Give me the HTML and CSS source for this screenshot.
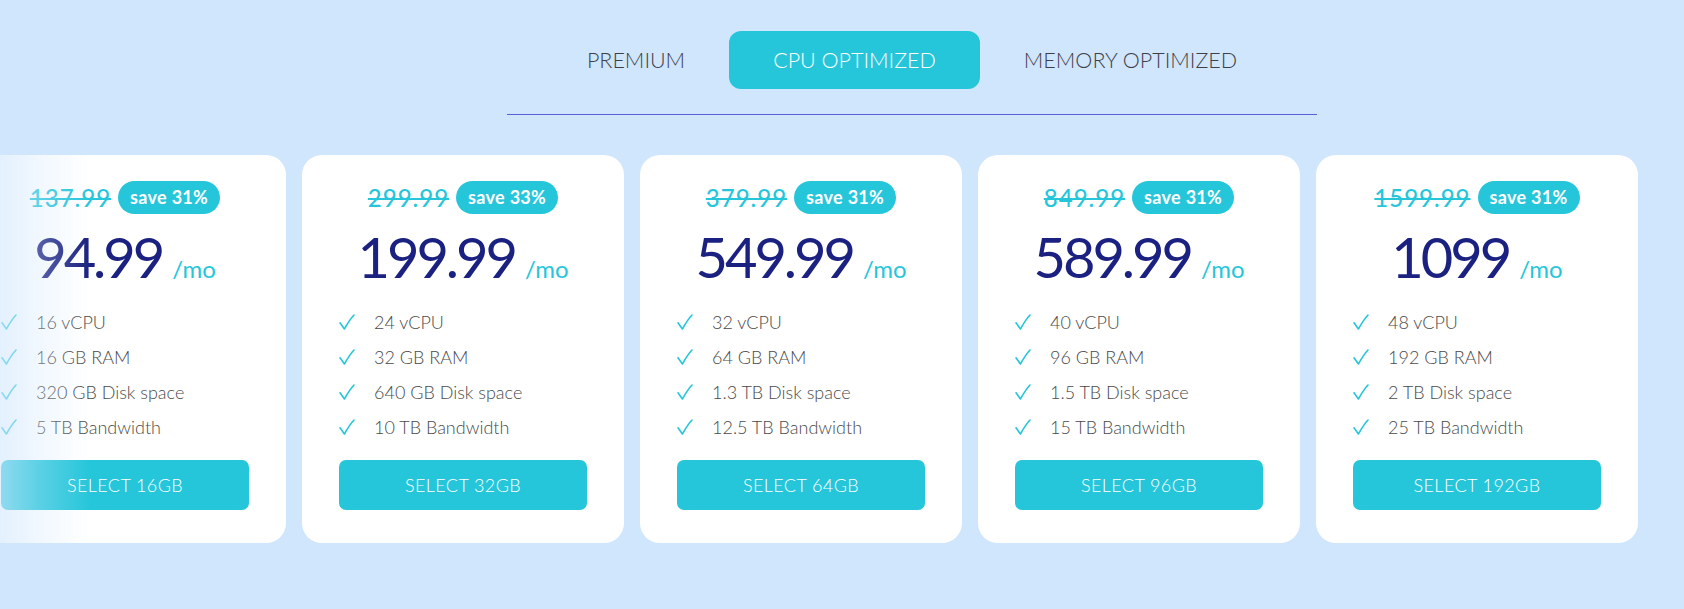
FILE: index.html
```html
<!DOCTYPE html>
<html lang="en">
<head>
<meta charset="utf-8">
<title>Plans</title>
<link rel="stylesheet" href="styles.css">
</head>
<body>
<main class="page">
  <nav class="tabs-wrap">
    <div class="tabs">
      <button class="tab">PREMIUM</button>
      <button class="tab active">CPU OPTIMIZED</button>
      <button class="tab">MEMORY OPTIMIZED</button>
    </div>
    <div class="divider"></div>
  </nav>

  <section class="carousel">
    <div class="track">
      <article class="card">
        <div class="old-row"><span class="old">137.99</span><span class="badge">save 31%</span></div>
        <div class="price-row"><span class="price">94.99</span><span class="per">/mo</span></div>
        <ul class="features">
          <li><svg class="check" viewBox="0 0 16 16"><path d="M1 8.8 L5.4 15 C8.2 10 11 5.2 15 1"/></svg><span>16 vCPU</span></li>
          <li><svg class="check" viewBox="0 0 16 16"><path d="M1 8.8 L5.4 15 C8.2 10 11 5.2 15 1"/></svg><span>16 GB RAM</span></li>
          <li><svg class="check" viewBox="0 0 16 16"><path d="M1 8.8 L5.4 15 C8.2 10 11 5.2 15 1"/></svg><span>320 GB Disk space</span></li>
          <li><svg class="check" viewBox="0 0 16 16"><path d="M1 8.8 L5.4 15 C8.2 10 11 5.2 15 1"/></svg><span>5 TB Bandwidth</span></li>
        </ul>
        <button class="select">SELECT 16GB</button>
      </article>

      <article class="card">
        <div class="old-row"><span class="old">299.99</span><span class="badge">save 33%</span></div>
        <div class="price-row"><span class="price">199.99</span><span class="per">/mo</span></div>
        <ul class="features">
          <li><svg class="check" viewBox="0 0 16 16"><path d="M1 8.8 L5.4 15 C8.2 10 11 5.2 15 1"/></svg><span>24 vCPU</span></li>
          <li><svg class="check" viewBox="0 0 16 16"><path d="M1 8.8 L5.4 15 C8.2 10 11 5.2 15 1"/></svg><span>32 GB RAM</span></li>
          <li><svg class="check" viewBox="0 0 16 16"><path d="M1 8.8 L5.4 15 C8.2 10 11 5.2 15 1"/></svg><span>640 GB Disk space</span></li>
          <li><svg class="check" viewBox="0 0 16 16"><path d="M1 8.8 L5.4 15 C8.2 10 11 5.2 15 1"/></svg><span>10 TB Bandwidth</span></li>
        </ul>
        <button class="select">SELECT 32GB</button>
      </article>

      <article class="card">
        <div class="old-row"><span class="old">379.99</span><span class="badge">save 31%</span></div>
        <div class="price-row"><span class="price">549.99</span><span class="per">/mo</span></div>
        <ul class="features">
          <li><svg class="check" viewBox="0 0 16 16"><path d="M1 8.8 L5.4 15 C8.2 10 11 5.2 15 1"/></svg><span>32 vCPU</span></li>
          <li><svg class="check" viewBox="0 0 16 16"><path d="M1 8.8 L5.4 15 C8.2 10 11 5.2 15 1"/></svg><span>64 GB RAM</span></li>
          <li><svg class="check" viewBox="0 0 16 16"><path d="M1 8.8 L5.4 15 C8.2 10 11 5.2 15 1"/></svg><span>1.3 TB Disk space</span></li>
          <li><svg class="check" viewBox="0 0 16 16"><path d="M1 8.8 L5.4 15 C8.2 10 11 5.2 15 1"/></svg><span>12.5 TB Bandwidth</span></li>
        </ul>
        <button class="select">SELECT 64GB</button>
      </article>

      <article class="card">
        <div class="old-row"><span class="old">849.99</span><span class="badge">save 31%</span></div>
        <div class="price-row"><span class="price">589.99</span><span class="per">/mo</span></div>
        <ul class="features">
          <li><svg class="check" viewBox="0 0 16 16"><path d="M1 8.8 L5.4 15 C8.2 10 11 5.2 15 1"/></svg><span>40 vCPU</span></li>
          <li><svg class="check" viewBox="0 0 16 16"><path d="M1 8.8 L5.4 15 C8.2 10 11 5.2 15 1"/></svg><span>96 GB RAM</span></li>
          <li><svg class="check" viewBox="0 0 16 16"><path d="M1 8.8 L5.4 15 C8.2 10 11 5.2 15 1"/></svg><span>1.5 TB Disk space</span></li>
          <li><svg class="check" viewBox="0 0 16 16"><path d="M1 8.8 L5.4 15 C8.2 10 11 5.2 15 1"/></svg><span>15 TB Bandwidth</span></li>
        </ul>
        <button class="select">SELECT 96GB</button>
      </article>

      <article class="card">
        <div class="old-row"><span class="old">1599.99</span><span class="badge">save 31%</span></div>
        <div class="price-row"><span class="price">1099</span><span class="per">/mo</span></div>
        <ul class="features">
          <li><svg class="check" viewBox="0 0 16 16"><path d="M1 8.8 L5.4 15 C8.2 10 11 5.2 15 1"/></svg><span>48 vCPU</span></li>
          <li><svg class="check" viewBox="0 0 16 16"><path d="M1 8.8 L5.4 15 C8.2 10 11 5.2 15 1"/></svg><span>192 GB RAM</span></li>
          <li><svg class="check" viewBox="0 0 16 16"><path d="M1 8.8 L5.4 15 C8.2 10 11 5.2 15 1"/></svg><span>2 TB Disk space</span></li>
          <li><svg class="check" viewBox="0 0 16 16"><path d="M1 8.8 L5.4 15 C8.2 10 11 5.2 15 1"/></svg><span>25 TB Bandwidth</span></li>
        </ul>
        <button class="select">SELECT 192GB</button>
      </article>
    </div>
    <div class="fade"></div>
  </section>
</main>
</body>
</html>
```

FILE: styles.css
```css
* {
  box-sizing: border-box;
}

html, body {
  margin: 0;
  padding: 0;
}

body {
  background: #d0e6fc;
  font-family: "Lato", "Noto Sans", sans-serif;
  color: #444;
  overflow: hidden;
  width: 1684px;
  height: 609px;
}

.page {
  display: flex;
  flex-direction: column;
}

/* ---------- tabs ---------- */
.tabs-wrap {
  display: flex;
  flex-direction: column;
  align-items: center;
  padding-left: 140px;
  padding-top: 31px;
}

.tabs {
  display: flex;
  align-items: center;
}

.tab {
  height: 58px;
  padding: 0 44px;
  border: none;
  background: transparent;
  font-family: "Lato", sans-serif;
  font-size: 21.5px;
  font-weight: 300;
  color: #3f3f4a;
  border-radius: 12px;
  cursor: pointer;
}

.tab.active {
  background: #26c6da;
  color: #fff;
}

.divider {
  width: 810px;
  height: 1px;
  background: #5a60d4;
  margin-top: 25px;
}

/* ---------- carousel ---------- */
.carousel {
  position: relative;
  margin-top: 40px;
}

.track {
  display: flex;
  gap: 16px;
  transform: translateX(-36px);
}

.card {
  flex: 0 0 322px;
  height: 388px;
  background: #fff;
  border-radius: 20px;
  padding: 26px 37px 32px;
  display: flex;
  flex-direction: column;
}

.old-row {
  height: 33px;
  display: flex;
  align-items: center;
  justify-content: center;
  gap: 7px;
}

.old {
  font-size: 24px;
  font-weight: 500;
  letter-spacing: 1px;
  color: #26c6da;
  text-decoration: line-through;
  text-decoration-thickness: 2px;
}

.badge {
  height: 33px;
  line-height: 33px;
  padding: 0 12px;
  border-radius: 17px;
  background: #26c6da;
  color: #fff;
  font-size: 18px;
  font-weight: 700;
  letter-spacing: 0.3px;
}

.price-row {
  margin-top: 15px;
  height: 56px;
  display: flex;
  align-items: baseline;
  justify-content: center;
  gap: 10px;
}

.price {
  font-size: 56px;
  line-height: 56px;
  font-weight: 400;
  color: #1b2180;
  letter-spacing: -3px;
}

.per {
  font-size: 24px;
  color: #26c6da;
}

.features {
  list-style: none;
  margin: 19px 0 0;
  padding: 0;
}

.features li {
  height: 35px;
  display: flex;
  align-items: center;
  gap: 19px;
  font-size: 18px;
  font-weight: 300;
  color: #4a4a4a;
}

.check {
  width: 16px;
  height: 16px;
  fill: none;
  stroke: #26c6da;
  stroke-width: 1.6;
  stroke-linecap: round;
  stroke-linejoin: round;
  flex: 0 0 auto;
}

.select {
  margin-top: 16px;
  height: 50px;
  width: 100%;
  border: none;
  border-radius: 7px;
  background: #26c6da;
  color: #fff;
  font-family: "Lato", sans-serif;
  font-size: 18px;
  font-weight: 300;
  letter-spacing: 0.4px;
  cursor: pointer;
}

.fade {
  position: absolute;
  left: 0;
  top: 0;
  bottom: 0;
  width: 90px;
  background: linear-gradient(90deg, rgba(210, 231, 253, 0.62) 0%, rgba(210, 231, 253, 0.3) 45%, rgba(210, 231, 253, 0) 100%);
  pointer-events: none;
}
```
